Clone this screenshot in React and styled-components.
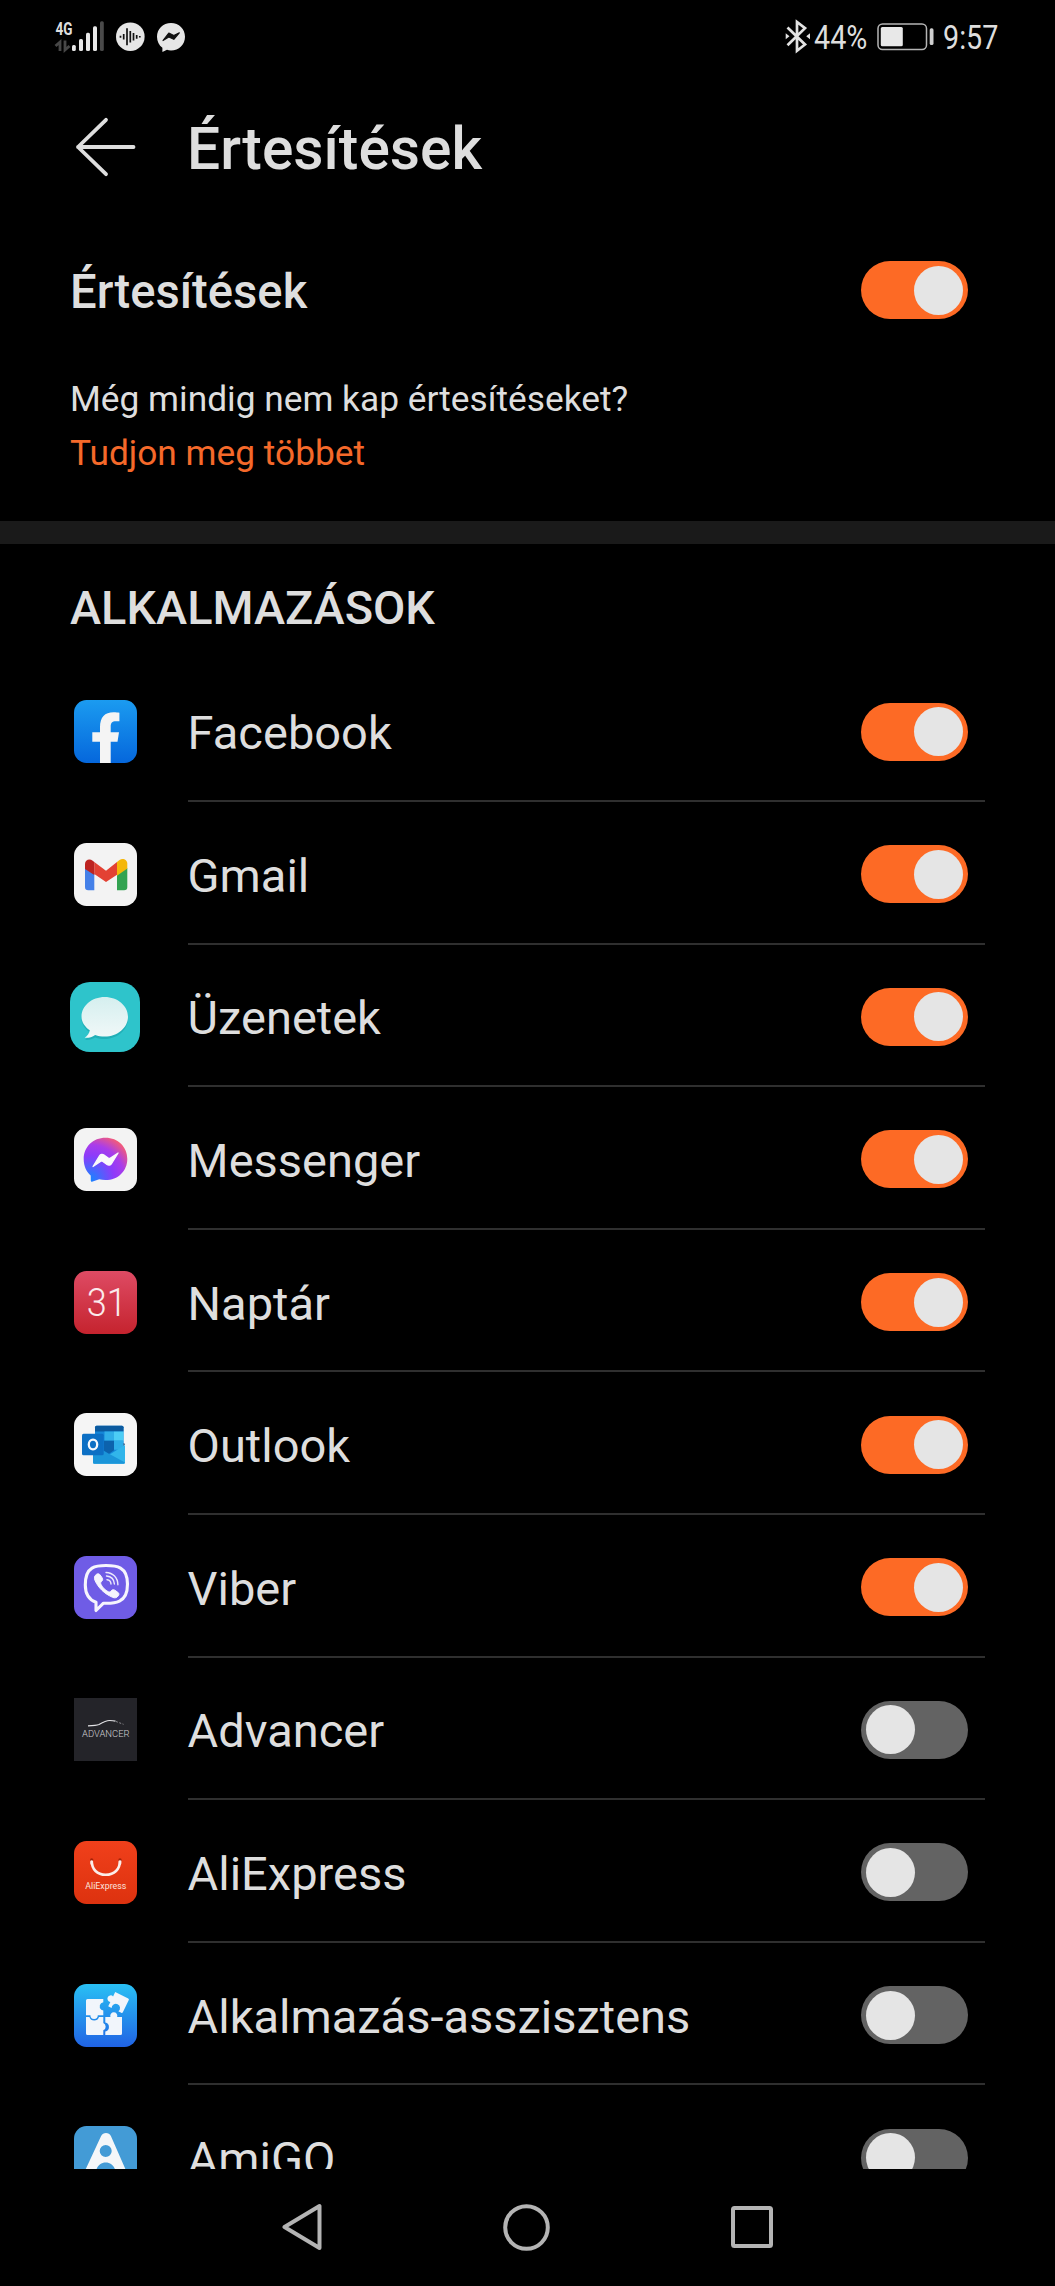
import React, { useState } from 'react';
import styled, { createGlobalStyle } from 'styled-components';

const GlobalStyle = createGlobalStyle`
    * {
        box-sizing: border-box;
    }

    body {
        margin: 0;
        background: #000;
    }
`;

const Screen = styled.div`
    display: flex;
    flex-direction: column;
    width: 1055px;
    height: 2286px;
    overflow: hidden;
    background: #000;
    color: #dedede;
    font-family: Roboto, "Liberation Sans", sans-serif;

    svg {
        display: block;
        flex: none;
    }
`;

const StatusBar = styled.div`
    display: flex;
    flex: none;
    justify-content: space-between;
    height: 74px;
    padding: 0 54px;
`;

const StatusGroup = styled.div`
    display: flex;
    align-items: center;
`;

const StatusText = styled.div`
    width: ${({ $width }) => $width}px;
    height: 74px;
    line-height: 75px;
    font-size: 33px;
    white-space: nowrap;
    transform: scaleX(0.87);
    transform-origin: left;
`;

const Header = styled.header`
    display: flex;
    align-items: center;
    flex: none;
    height: 146px;
    padding: 0 75px;

    h1 {
        margin: 0 0 0 51px;
        font-size: 58.7px;
        line-height: 70px;
        font-weight: 500;
        padding-top: 3px;
    }
`;

const MainSetting = styled.section`
    display: flex;
    align-items: center;
    justify-content: space-between;
    flex: none;
    height: 140px;
    padding: 0 87px 0 70px;

    h2 {
        margin: 0;
        padding-top: 3px;
        font-size: 47.2px;
        line-height: 56px;
        font-weight: 500;
    }
`;

const Help = styled.section`
    flex: none;
    height: 161px;
    padding: 12px 70px 0;
    font-size: 35.3px;
    line-height: 54px;

    p {
        margin: 0;
    }

    a {
        color: #f5692a;
        text-decoration: none;
    }
`;

const Band = styled.div`
    flex: none;
    height: 23px;
    background: #1a1a1a;
`;

const ListTitle = styled.h2`
    flex: none;
    height: 115.4px;
    margin: 0;
    padding: 36px 70px 0;
    font-size: 46.9px;
    line-height: 56px;
    font-weight: 500;
`;

const List = styled.div`
    flex: none;
    height: 1509.6px;
    overflow: hidden;
`;

const Row = styled.div`
    display: flex;
    height: 142.6px;
    padding: 0 70px;
`;

const IconSlot = styled.div`
    display: flex;
    align-items: center;
    justify-content: center;
    width: 70px;
    margin-right: 47.6px;
    padding-top: 2px;
`;

const RowBody = styled.div`
    display: flex;
    flex: 1;
    align-items: center;
    justify-content: space-between;
    padding: 4px 17px 0 0;
    border-bottom: 2px solid #2f2f2f;
`;

const AppName = styled.div`
    padding-top: 3px;
    font-size: 47px;
    line-height: 56px;
`;

const Track = styled.button`
    display: flex;
    flex: none;
    align-items: center;
    justify-content: ${({ $on }) => ($on ? 'flex-end' : 'flex-start')};
    width: 107px;
    height: 58px;
    padding: 0 5px;
    border: 0;
    border-radius: 29px;
    background: ${({ $on }) => ($on ? '#fd6a25' : '#636363')};
`;

const Knob = styled.span`
    width: 49px;
    height: 49px;
    border-radius: 50%;
    background: #e5e5e5;
`;

const NavBar = styled.nav`
    display: flex;
    flex: 1;
    align-items: center;
    justify-content: space-between;
    padding: 0 282px;
`;

const Switch = ({ on, onClick }) => (
    <Track $on={on} role="switch" aria-checked={on} onClick={onClick}>
        <Knob />
    </Track>
);

const Signal = () => (
    <svg width="52" height="74" viewBox="54 0 52 74">
        <text x="55.5" y="35" fontSize="18.5" fontWeight="700" fill="#dedede" textLength="17" lengthAdjust="spacingAndGlyphs">4G</text>
        <path d="M55.500 46l4.500-4V51M65 40.500V50l4.500-4" fill="none" stroke="#474747" strokeWidth="2.800" />
        <g fill="#e8e8e8">
            <rect x="72" y="45" width="3.800" height="6" rx="1.500" />
            <rect x="79" y="39" width="4" height="12" rx="1.500" />
            <rect x="86" y="32.700" width="4" height="18.300" rx="1.500" />
            <rect x="93" y="26.300" width="4" height="24.700" rx="1.500" />
        </g>
        <rect x="100" y="21.300" width="3.800" height="29.700" rx="1.500" fill="#4a4a4a" />
    </svg>
);

const Voice = () => (
    <svg width="50" height="74" viewBox="106 0 50 74">
        <circle cx="130.300" cy="36.700" r="14.300" fill="#e6e6e6" />
        <path d="M120.500 35.700v2M123.700 34v5.500M127 28.200v17M130.300 31v11.500M133.500 33v7.500M136.700 35v3.700M139.800 36v1.600" stroke="#111" strokeWidth="1.700" />
    </svg>
);

const MessengerStatus = () => (
    <svg width="30" height="74" viewBox="156 0 30 74">
        <path d="M171 23c8 0 14 6 14 13.700s-6 13.700-14 13.700c-1.500 0-2.800-.2-4-.6L162.400 52v-4.200c-3.400-2.500-5.400-6.500-5.400-11.100C157 29 163 23 171 23z" fill="#e6e6e6" />
        <path d="M163 40.500l5.800-7.500 5 2.500 5.500-2.700-5.500 6.500-5-2.300z" fill="#111" stroke="#111" strokeWidth="1.200" strokeLinejoin="round" />
    </svg>
);

const Bluetooth = () => (
    <svg width="29" height="74" viewBox="785 0 29 74">
        <path d="M787.500 27.500l17.500 17-8 6.200V22l8 6.200-17.500 17" fill="none" stroke="#e2e2e2" strokeWidth="2.700" />
        <path d="M785.700 33.300l3.800 3-3.800 3zM810 33.300l-3.800 3 3.800 3z" fill="#e2e2e2" />
    </svg>
);

const Battery = () => (
    <svg width="66" height="74" viewBox="877 0 66 74">
        <rect x="878" y="24" width="48.500" height="25.500" rx="4.500" fill="none" stroke="#b5b5b5" strokeWidth="1.500" />
        <rect x="880.800" y="27" width="22" height="19.300" rx="1.500" fill="#e8e8e8" />
        <rect x="929.700" y="28.300" width="3.800" height="16.700" rx="1.600" fill="#cfcfcf" />
    </svg>
);

const BackArrow = () => (
    <svg width="61" height="60" viewBox="0 0 61 60" fill="none" stroke="#dedede" strokeWidth="3.800" strokeLinecap="round" strokeLinejoin="round">
        <path d="M58.500 30H3M31 2.800L3 30l28 27.200" />
    </svg>
);

const Tile = ({ fill, square, children }) => (
    <svg width="63" height="63" viewBox="0 0 63 63">
        <rect width="63" height="63" rx={square ? 0 : 12.500} fill={fill} />
        {children}
    </svg>
);

const Gradient = ({ id, from, to }) => (
    <linearGradient id={id} x1="0" y1="0" x2="0" y2="1">
        <stop offset="0" stopColor={from} />
        <stop offset="1" stopColor={to} />
    </linearGradient>
);

const FacebookIcon = () => (
    <Tile fill="url(#fb)">
        <Gradient id="fb" from="#1b9bf0" to="#0567dc" />
        <path d="M26 63V41.700h-7.700v-9.400H26V27c0-9.700 4.800-14.800 13.500-14.800 2.500 0 4.600.2 5.900.6v8.500h-3.600c-3.700 0-5.100 1.700-5.100 5.200v5.800H45l-1.500 9.400h-6.800V63z" fill="#f4f4f4" />
    </Tile>
);

const GmailIcon = () => (
    <Tile fill="#f3f3f3">
        <path d="M11 25l9.300 5v17.300h-6.100a3.200 3.200 0 0 1-3.200-3.200z" fill="#4480e8" />
        <path d="M43 30l10.300-5v19.100a3.200 3.200 0 0 1-3.200 3.200H43z" fill="#33a351" />
        <path d="M43 19l2.500-2c3.300-2.600 7.800-.4 7.800 3.700v4.800L43 32.700z" fill="#f4b70a" />
        <path d="M20.300 19L32 27.700 43 19v12.700L32 39l-11.700-8z" fill="#e34133" />
        <path d="M20.300 19l-1.600-1.300c-3.200-2.500-7.700-.9-7.700 3.200V26l9.300 6z" fill="#bd2320" />
    </Tile>
);

const MessagesIcon = () => (
    <svg width="70" height="70" viewBox="0 0 70 70">
        <Gradient id="sms" from="#d5efef" to="#f1f8f8" />
        <rect width="70" height="70" rx="20" fill="#2ec4cb" />
        <path d="M34.700 17C47.500 17 58 25.500 58 36.500S47.500 57 34.700 57c-3.500 0-6.500-.5-9.500-1.600-3 1.900-6.500 2.800-10.200 2.400 2.500-1.800 4.300-4.500 4.800-7.500-5-3.500-8.300-8.300-8.300-13.800C11.500 25.500 21.900 17 34.700 17z" fill="#1aa5ac" opacity=".65" />
        <path d="M34.700 15C47.500 15 58 23.800 58 34.700S47.500 54.500 34.700 54.500c-3.500 0-6.500-.5-9.500-1.600-3 2.100-6.500 3.200-10.500 2.900 2.700-1.900 4.600-4.600 5.100-7.600-5-3.500-8.300-8.200-8.300-13.500C11.500 23.800 21.900 15 34.700 15z" fill="url(#sms)" />
    </svg>
);

const MessengerIcon = () => (
    <Tile fill="#f3f3f3">
        <radialGradient id="msg" cx=".15" cy=".95" r="1.100">
            <stop offset="0" stopColor="#1685ff" />
            <stop offset=".5" stopColor="#8d3bfa" />
            <stop offset=".72" stopColor="#a93dea" />
            <stop offset="1" stopColor="#fb5f6c" />
        </radialGradient>
        <path d="M31.500 9.700c12.500 0 21.800 9.200 21.800 21.200s-9.300 21.200-21.800 21.200c-2.200 0-4.300-.3-6.300-.8L18 53.800c-.7.200-1.200-.2-1.200-1l-.1-5.300C12.300 43.600 9.700 37.800 9.700 30.900 9.700 18.900 19 9.700 31.500 9.700z" fill="url(#msg)" />
        <path d="M19 38.500l6.500-10.600c1-1.600 3-2 4.500-.9l4.500 3.200c.6.4 1 .4 1.600 0l8-5.200-6.600 10.600c-1 1.600-3 2-4.500.9l-4.500-3.200c-.6-.4-1-.4-1.600 0z" fill="#fafafa" stroke="#fafafa" strokeWidth="1.200" strokeLinejoin="round" />
    </Tile>
);

const CalendarIcon = () => (
    <Tile fill="url(#cal)">
        <Gradient id="cal" from="#de4b64" to="#c5232e" />
        <text x="12.800" y="45" fontSize="39" fontWeight="300" fill="#fbeaec" textLength="40" lengthAdjust="spacingAndGlyphs">31</text>
    </Tile>
);

const OutlookIcon = () => (
    <Tile fill="#f5f5f5">
        <rect x="21" y="12.700" width="28.500" height="32" rx="1.500" fill="#1586d8" />
        <path d="M22.500 12.700H48a1.500 1.500 0 0 1 1.500 1.500v4.300H21v-4.300a1.500 1.500 0 0 1 1.500-1.500z" fill="#0b5a9f" />
        <rect x="30.500" y="18.500" width="9.500" height="9.200" fill="#30aee8" />
        <rect x="40" y="18.500" width="9.500" height="9.200" fill="#4ccdf5" />
        <rect x="40" y="27.700" width="9.500" height="9" fill="#2eaee9" />
        <path d="M49.500 30l1.600 1-1.600 2z" fill="#164a7c" />
        <path d="M51 32v17.200a1.500 1.500 0 0 1-1.500 1.500h-29A1.500 1.500 0 0 1 19 49.200V33l16.200 8.700z" fill="#31b5ea" />
        <path d="M30 38l21 11.500a1.500 1.500 0 0 1-1.500 1.200h-29A1.500 1.500 0 0 1 19 49.200V38z" fill="#1b95d9" />
        <path d="M30 27.700h10v9.600l-5 3.400-5-3z" fill="#0c62ad" />
        <rect x="8" y="20.700" width="21.700" height="21.600" rx="1.500" fill="#0c6fc4" />
        <ellipse cx="19" cy="31.500" rx="4.200" ry="4.800" fill="none" stroke="#f4f8fc" strokeWidth="2.300" />
    </Tile>
);

const ViberIcon = () => (
    <Tile fill="#6f5ce6">
        <path d="M32 9.500c6 0 11 .6 14.500 2.600 5 2.900 7 8 7 16 0 8.500-2.500 14.500-8 17-4.300 2-10 2.400-16 2.100L22 54.500v-8.200c-6.800-2.500-10.700-7-10.700-17.300 0-8.500 1.900-14 6.700-16.900 3.600-2.100 8.500-2.600 14-2.600z" fill="none" stroke="#f6f5fd" strokeWidth="3.100" strokeLinejoin="round" />
        <path d="M22.500 18.300c1.300-1 2.700-.6 3.700.7l2 2.900c.8 1.300.5 2.500-.5 3.400-1.300 1.100-1.300 2-.5 3.500 1.600 3 4 5.400 7 6.900 1.200.6 2 .3 2.900-.8 1-1.300 2.300-1.500 3.700-.7l3 2.100c1.300 1 1.500 2.200.5 3.500-1.500 2-3.500 2.600-5.800 1.500C30 37.500 24.500 32 21 24.500c-1-2.500-.8-4.500 1.500-6.200z" fill="#f6f5fd" stroke="#f6f5fd" />
        <path d="M32 16.500c7 .2 11.800 5 11.900 12.300M32.500 20c4.800.5 7.600 3.300 7.900 8M33 23.700c2.500.3 3.900 1.700 4 4.300" fill="none" stroke="#ece9fc" strokeWidth="1.400" strokeLinecap="round" />
    </Tile>
);

const AdvancerIcon = () => (
    <Tile fill="#242429" square>
        <path d="M14 27.800c4-.1 8.500-.3 11-1.300 4-2.300 7-4 10.500-4 2.500 0 4 .1 6 .6" fill="none" stroke="#e2e2e5" strokeWidth="1.200" />
        <path d="M42 23.500l7.500 2.800" stroke="#8d8d92" strokeWidth="1" strokeDasharray="2 1.500" />
        <text x="8" y="39.300" fontSize="9.400" fontWeight="300" fill="#cfcfd3" textLength="47.500" lengthAdjust="spacingAndGlyphs">ADVANCER</text>
    </Tile>
);

const AliExpressIcon = () => (
    <Tile fill="url(#ali)">
        <Gradient id="ali" from="#f0401b" to="#dd320f" />
        <path d="M17.700 19.500c0 9 5.500 14.300 14 14.300s14.300-5.300 14.300-14.300" fill="none" stroke="#fbeeea" strokeWidth="2.600" strokeLinecap="round" />
        <circle cx="17.700" cy="19" r="1.700" fill="#a62208" />
        <circle cx="46" cy="19" r="1.700" fill="#a62208" />
        <path d="M17.700 20.500v2M46 20.500v2" stroke="#fbeeea" strokeWidth="2.600" strokeLinecap="round" />
        <text x="11.300" y="48.300" fontSize="9.600" fill="#fbe3dd" textLength="41" lengthAdjust="spacingAndGlyphs">AliExpress</text>
    </Tile>
);

const AssistantIcon = () => (
    <Tile fill="url(#asst)">
        <Gradient id="asst" from="#29c0f4" to="#2063e4" />
        <g fill="#f1f5fb">
            <path d="M13.500 15H29.300v3.200a4.300 4.300 0 0 0-2 7.600l2 .8v4.700h-5.500a3.700 3.700 0 0 1-7.400 0H12V16.500A1.500 1.500 0 0 1 13.500 15z" />
            <path d="M12 33h3.400a5 5 0 0 0 9.600 0h4.300v6a4 4 0 0 1 0 7.300V51H13.500a1.500 1.500 0 0 1-1.500-1.500z" />
            <path d="M31.300 33h5.200a3.500 3.500 0 1 1 6.600 0H48v16.500a1.500 1.500 0 0 1-1.500 1.500H31.300v-3.500a4.600 4.600 0 0 0 0-9z" />
            <path d="M37 10.800h14.500a1.200 1.200 0 0 1 1.200 1.200V25.500a1.200 1.200 0 0 1-1.200 1.200h-3.200a4.200 4.200 0 1 0-7.500 0H37v-4.900a3.300 3.300 0 1 1 0-6.200z" transform="rotate(26 45 18.500)" />
        </g>
    </Tile>
);

const AmigoIcon = () => (
    <Tile fill="#439bd6">
        <path fillRule="evenodd" d="M27 10.300c2-4.400 8-4.400 10 0L54 49H42c0-7-4-12.500-10.300-12.500S21.500 42 21.500 49H9zM31.700 19a6 6 0 1 0 0 12 6 6 0 0 0 0-12z" fill="#f5f7f9" />
    </Tile>
);

const initialApps = [
    { name: 'Facebook', icon: FacebookIcon, on: true },
    { name: 'Gmail', icon: GmailIcon, on: true },
    { name: 'Üzenetek', icon: MessagesIcon, on: true },
    { name: 'Messenger', icon: MessengerIcon, on: true },
    { name: 'Naptár', icon: CalendarIcon, on: true },
    { name: 'Outlook', icon: OutlookIcon, on: true },
    { name: 'Viber', icon: ViberIcon, on: true },
    { name: 'Advancer', icon: AdvancerIcon, on: false },
    { name: 'AliExpress', icon: AliExpressIcon, on: false },
    { name: 'Alkalmazás-asszisztens', icon: AssistantIcon, on: false },
    { name: 'AmiGO', icon: AmigoIcon, on: false },
];

const App = () => {
    const [allOn, setAllOn] = useState(true);
    const [apps, setApps] = useState(initialApps);

    const toggle = (name) => {
        setApps(apps.map((app) => (app.name === name ? { ...app, on: !app.on } : app)));
    };

    return (
        <Screen>
            <GlobalStyle />
            <StatusBar>
                <StatusGroup>
                    <Signal />
                    <Voice />
                    <MessengerStatus />
                </StatusGroup>
                <StatusGroup>
                    <Bluetooth />
                    <StatusText $width={63}>44%</StatusText>
                    <Battery />
                    <StatusText $width={58}>9:57</StatusText>
                </StatusGroup>
            </StatusBar>
            <Header>
                <BackArrow />
                <h1>Értesítések</h1>
            </Header>
            <MainSetting>
                <h2>Értesítések</h2>
                <Switch on={allOn} onClick={() => setAllOn(!allOn)} />
            </MainSetting>
            <Help>
                <p>Még mindig nem kap értesítéseket?</p>
                <a href="#more">Tudjon meg többet</a>
            </Help>
            <Band />
            <ListTitle>ALKALMAZÁSOK</ListTitle>
            <List>
                {apps.map(({ name, icon: Icon, on }) => {
                    return (
                        <Row key={name}>
                            <IconSlot>
                                <Icon />
                            </IconSlot>
                            <RowBody>
                                <AppName>{name}</AppName>
                                <Switch on={on} onClick={() => toggle(name)} />
                            </RowBody>
                        </Row>
                    )
                })}
            </List>
            <NavBar>
                <svg width="40" height="48" viewBox="0 0 40 48" fill="none" stroke="#b4b4b4" strokeWidth="4" strokeLinejoin="round">
                    <path d="M37.500 3v42L2.500 24z" />
                </svg>
                <svg width="47" height="47" viewBox="0 0 47 47" fill="none" stroke="#b4b4b4" strokeWidth="4">
                    <circle cx="23.500" cy="23.500" r="21.300" />
                </svg>
                <svg width="42" height="42" viewBox="0 0 42 42" fill="none" stroke="#b4b4b4" strokeWidth="4">
                    <rect x="2" y="2" width="38" height="38" rx="1.500" />
                </svg>
            </NavBar>
        </Screen>
    )
}

export default App;
